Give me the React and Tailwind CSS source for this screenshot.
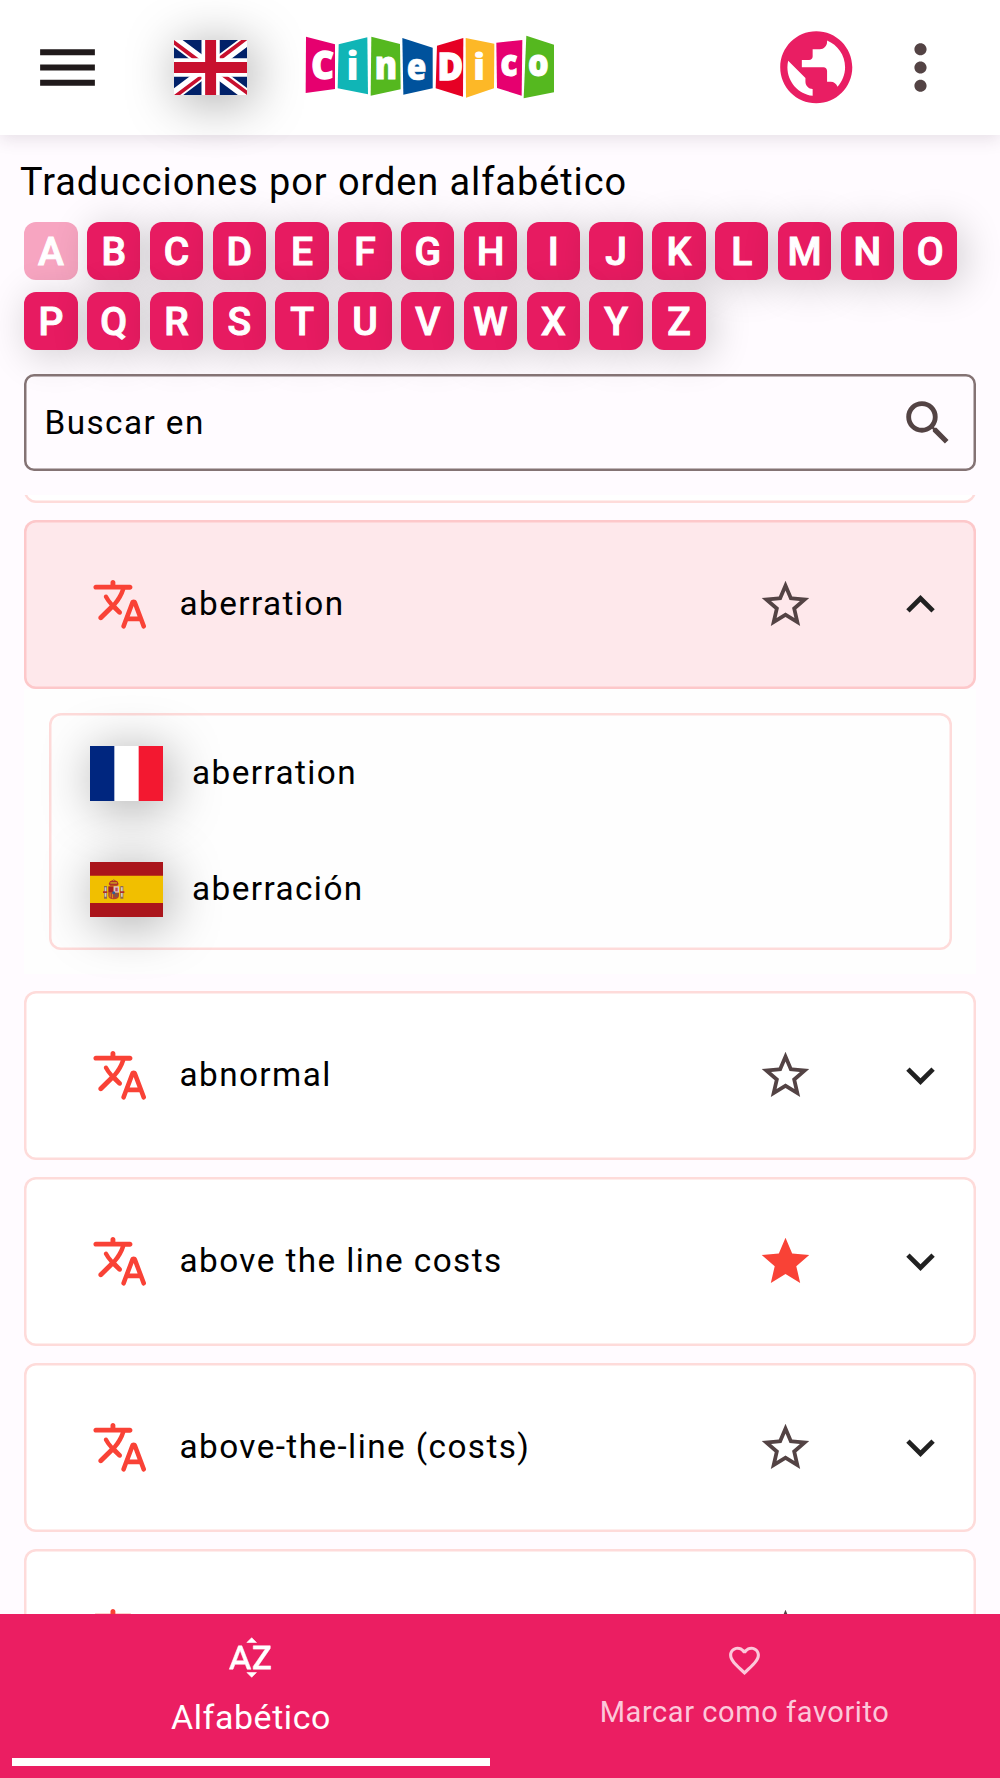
import React from "react";
import {
  MdMenu,
  MdPublic,
  MdMoreVert,
  MdSearch,
  MdStar,
  MdStarOutline,
  MdExpandMore,
  MdExpandLess,
  MdFavoriteBorder,
} from "react-icons/md";

const FLAG = "block h-[55px] w-[73px] shrink-0 shadow-[5px_6px_52px_rgba(0,0,0,0.36)]";

function FlagGB() {
  return (
    <svg viewBox="0 0 640 480" preserveAspectRatio="none" className={FLAG}>
      <path fill="#012169" d="M0 0h640v480H0z" />
      <path fill="#fff" d="m75 0 244 181L562 0h78v62L400 241l240 178v61h-80L320 301 81 480H0v-60l239-178L0 64V0z" />
      <path fill="#c8102e" d="m424 281 216 159v40L369 281zm-184 20 6 35L54 480H0zM640 0v3L391 191l2-44L590 0zM0 0l239 176h-60L0 42z" />
      <path fill="#fff" d="M241 0v480h160V0zM0 160v160h640V160z" />
      <path fill="#c8102e" d="M0 193v96h640v-96zM273 0v480h96V0z" />
    </svg>
  );
}

function FlagFR() {
  return (
    <svg viewBox="0 0 3 2" preserveAspectRatio="none" className={FLAG}>
      <path fill="#fff" d="M0 0h3v2H0z" />
      <path fill="#00267f" d="M0 0h1v2H0z" />
      <path fill="#f31830" d="M2 0h1v2H2z" />
    </svg>
  );
}

function FlagES() {
  return (
    <svg viewBox="0 0 219 165" preserveAspectRatio="none" className={FLAG}>
      <path fill="#aa151b" d="M0 0h219v165H0z" />
      <path fill="#f1bf00" d="M0 41h219v82H0z" />
      <path fill="#8f6b52" d="M42 72h9v38h-9zM91 72h9v38h-9z" />
      <path fill="#cfc9c4" d="M44 76h5v28h-5zM93 76h5v28h-5z" />
      <path fill="#b0302a" d="M39 88h13v5H39zM90 88h13v5H90zM56 66l4-8 11-5 11 5 4 8-4 5H60z" />
      <path fill="#c78a1e" d="M61 60h20v5H61zM69 51h4v6h-4z" />
      <path fill="#a32024" d="M55 73h16v19H55z" />
      <path fill="#d9c3cc" d="M71 73h16v19H71z" />
      <path fill="#b8485c" d="M76 77h7v11h-7z" />
      <path fill="#b5432a" d="M55 92h32v9q0 9-16 11-16-2-16-11z" />
      <path fill="#d98f1e" d="M59 94h3v12h-3zM66 94h3v15h-3z" />
      <path fill="#7a5a4c" d="M74 94h9v11h-9z" />
      <circle cx="71" cy="92" r="4.5" fill="#2e5a9c" />
    </svg>
  );
}

const TILES = [
  { fill: "#e6006f", points: "48,50 135,73 135,207 47,219", ch: "C", x: 98, y: 178, size: 117, w: 68, stroke: 4 },
  { fill: "#10b5b6", points: "146,73 232,52 234,223 143,205", ch: "i", x: 188, y: 180, size: 115, w: 38, stroke: 0 },
  { fill: "#55b81f", points: "244,50 330,72 332,208 242,227", ch: "n", x: 288, y: 177, size: 114, w: 67, stroke: 3 },
  { fill: "#00529c", points: "337,54 428,83 428,205 340,224", ch: "e", x: 380, y: 179, size: 112, w: 59, stroke: 2 },
  { fill: "#e60024", points: "441,77 520,54 519,230 437,205", ch: "D", x: 481, y: 181, size: 112, w: 77, stroke: 4 },
  { fill: "#fdb827", points: "527,54 613,71 612,205 528,233", ch: "i", x: 567, y: 181, size: 112, w: 38, stroke: 0 },
  { fill: "#e6006f", points: "619,68 697,60 695,227 621,204", ch: "c", x: 657, y: 169, size: 110, w: 51, stroke: 3 },
  { fill: "#55b81f", points: "709,47 792,74 792,217 701,235", ch: "o", x: 745, y: 169, size: 110, w: 62, stroke: 3 },
];

function Logo() {
  return (
    <svg viewBox="0 0 840 270" className="h-[90px] w-[280px] shrink-0">
      {TILES.map((t, i) => (
        <g key={i}>
          <polygon points={t.points} fill={t.fill} />
          <text
            x={t.x}
            y={t.y}
            fontSize={t.size}
            textLength={t.w}
            lengthAdjust="spacingAndGlyphs"
            textAnchor="middle"
            fill="#fff"
            stroke="#fff"
            strokeWidth={t.stroke}
            className="font-['Open_Sans'] font-extrabold tracking-normal"
          >
            {t.ch}
          </text>
        </g>
      ))}
    </svg>
  );
}

function TranslateIcon() {
  return (
    <svg viewBox="0 0 24 24" fill="currentColor" className="size-[58.5px] shrink-0 text-[#f94236]">
      <path d="M12.65 15.67c.14-.36.05-.77-.23-1.05l-2.09-2.06.03-.03c1.74-1.94 2.98-4.17 3.71-6.53h1.94c.54 0 .99-.45.99-.99v-.02c0-.54-.45-.99-.99-.99H10V3c0-.55-.45-1-1-1s-1 .45-1 1v1H1.99c-.54 0-.99.45-.99.99 0 .55.45.99.99.99h10.18C11.5 7.92 10.44 9.75 9 11.35c-.81-.89-1.49-1.86-2.06-2.88-.16-.29-.45-.47-.78-.47-.69 0-1.13.75-.79 1.35.63 1.13 1.4 2.21 2.3 3.21L3.3 16.87c-.4.39-.4 1.03 0 1.42.39.39 1.02.39 1.42 0L9 14l2.02 2.02c.51.51 1.38.32 1.63-.35zM17.5 10c-.6 0-1.14.37-1.35.94l-3.67 9.8c-.24.61.22 1.26.87 1.26.39 0 .74-.24.88-.61l.89-2.39h4.75l.9 2.39c.14.36.49.61.88.61.65 0 1.11-.65.88-1.26l-3.67-9.8c-.22-.57-.76-.94-1.36-.94zm-1.62 7l1.62-4.33L19.12 17h-3.24z" />
    </svg>
  );
}

function SortIcon() {
  return (
    <svg viewBox="0 0 24 24" fill="currentColor" stroke="currentColor" strokeWidth="0.3" className="mt-[19px] size-[49px]">
      <path d="M14.94 4.66h-4.72l2.36-2.36zm-4.69 14.71h4.66l-2.33 2.33zM6.1 6.27L1.6 17.73h1.84l.92-2.45h5.11l.92 2.45h1.84L7.74 6.27H6.1zm-1.13 7.37l1.94-5.18 1.94 5.18H4.97zm10.76 2.5h6.12v1.59h-8.53v-1.29l5.92-8.56h-5.88v-1.6h8.3v1.26l-5.93 8.6z" />
    </svg>
  );
}

function Entry({ term, open, starred }) {
  return (
    <div
      className={
        "flex h-[169px] shrink-0 items-center rounded-[12px] pl-[66.5px] pr-[27px] " +
        (open
          ? "bg-[#fee8eb] shadow-[inset_0_0_0_2.5px_#fdc8ca]"
          : "bg-white shadow-[inset_0_0_0_2.5px_#fedbda]")
      }
    >
      <TranslateIcon />
      <span className="ml-[30.5px] flex-1 whitespace-nowrap">{term}</span>
      {starred ? (
        <MdStar className="size-[57px] text-[#f94236]" />
      ) : (
        <MdStarOutline className="size-[57px] text-[#534344]" />
      )}
      {open ? (
        <MdExpandLess className="ml-[78px] size-[57px] text-[#212121]" />
      ) : (
        <MdExpandMore className="ml-[78px] size-[57px] text-[#212121]" />
      )}
    </div>
  );
}

function Translation({ flag, text }) {
  return (
    <div className="flex h-[116px] items-center">
      {flag}
      <span className="-mt-[1px] ml-[29.5px]">{text}</span>
    </div>
  );
}

export default function App() {
  return (
    <div className="flex h-[1778px] w-[1000px] flex-col overflow-hidden bg-[#fffbff] font-['Roboto',sans-serif] text-[33.3px] leading-[40px] tracking-[1.42px] text-black">
      <header className="relative z-10 flex h-[135px] shrink-0 items-center bg-white pl-[31px] shadow-[0_4px_16px_rgba(60,40,60,0.13)]">
        <MdMenu className="size-[73px] text-[#201a1b]" />
        <div className="ml-[70px]">
          <FlagGB />
        </div>
        <div className="ml-[43px] mt-[-5px]">
          <Logo />
        </div>
        <MdPublic className="ml-[203px] size-[86.5px] text-[#e91e63]" />
        <MdMoreVert className="ml-[24px] size-[73px] text-[#534344]" />
      </header>

      <h1 className="mt-[24px] h-[46px] shrink-0 pl-[20px] text-[37.9px] leading-[46px] tracking-[0.95px]">
        Traducciones por orden alfabético
      </h1>
      <div className="mt-[17px] flex h-[128px] shrink-0 flex-wrap content-start gap-x-[9.5px] gap-y-[12.2px] pl-[24.3px]">
        {"ABCDEFGHIJKLMNOPQRSTUVWXYZ".split("").map((l) => (
          <button
            key={l}
            className={
              "flex h-[57.8px] w-[53.3px] items-center justify-center rounded-[12px] pt-[4px] text-[39px] font-medium leading-none tracking-normal text-white [-webkit-text-stroke:1px_white] " +
              (l === "A" ? "bg-[#f7a5c1]" : "bg-[#e71b61] shadow-[5px_5px_40px_rgba(0,0,0,0.2)]")
            }
          >
            {l}
          </button>
        ))}
      </div>

      <div className="mx-[24px] mt-[24px] flex h-[97px] shrink-0 items-center justify-between rounded-[10px] pl-[20.5px] pr-[19px] shadow-[inset_0_0_0_2.5px_#847374]">
        <span>Buscar en</span>
        <MdSearch className="size-[58px] text-[#534344]" />
      </div>

      <main className="mt-[24px] flex min-h-0 flex-1 flex-col overflow-hidden px-[24px]">
        <div className="-mt-[161.5px] h-[169px] shrink-0 rounded-[12px] bg-white shadow-[inset_0_0_0_2.5px_#fedbda]" />
        <div className="mt-[17px] shrink-0">
          <Entry term="aberration" open />
          <div className="h-[285px] bg-[#fefefe] px-[24.5px] pt-[24px]">
            <div className="h-[237px] rounded-[12px] pl-[41px] pt-[2.5px] shadow-[inset_0_0_0_2.5px_#fedbda]">
              <Translation flag={<FlagFR />} text="aberration" />
              <Translation flag={<FlagES />} text="aberración" />
            </div>
          </div>
        </div>
        <div className="mt-[17px] flex shrink-0 flex-col gap-[17px]">
          <Entry term="abnormal" />
          <Entry term="above the line costs" starred />
          <Entry term="above-the-line (costs)" />
          <Entry term="" />
        </div>
      </main>

      <nav className="relative flex h-[164.5px] shrink-0 bg-[#eb1e62]">
        <div className="flex w-[500px] flex-col items-center text-white">
          <SortIcon />
          <span className="ml-[2px] mt-[16px] text-[33.9px] tracking-[0.6px]">Alfabético</span>
          <div className="ml-[2px] mt-[20px] h-[8px] w-[478px] bg-white" />
        </div>
        <div className="flex flex-1 flex-col items-center pr-[11px] text-[#fcc8da]">
          <MdFavoriteBorder className="mt-[28px] size-[37px]" />
          <span className="mt-[13px] text-[29px] tracking-[0.58px]">Marcar como favorito</span>
        </div>
      </nav>
    </div>
  );
}
